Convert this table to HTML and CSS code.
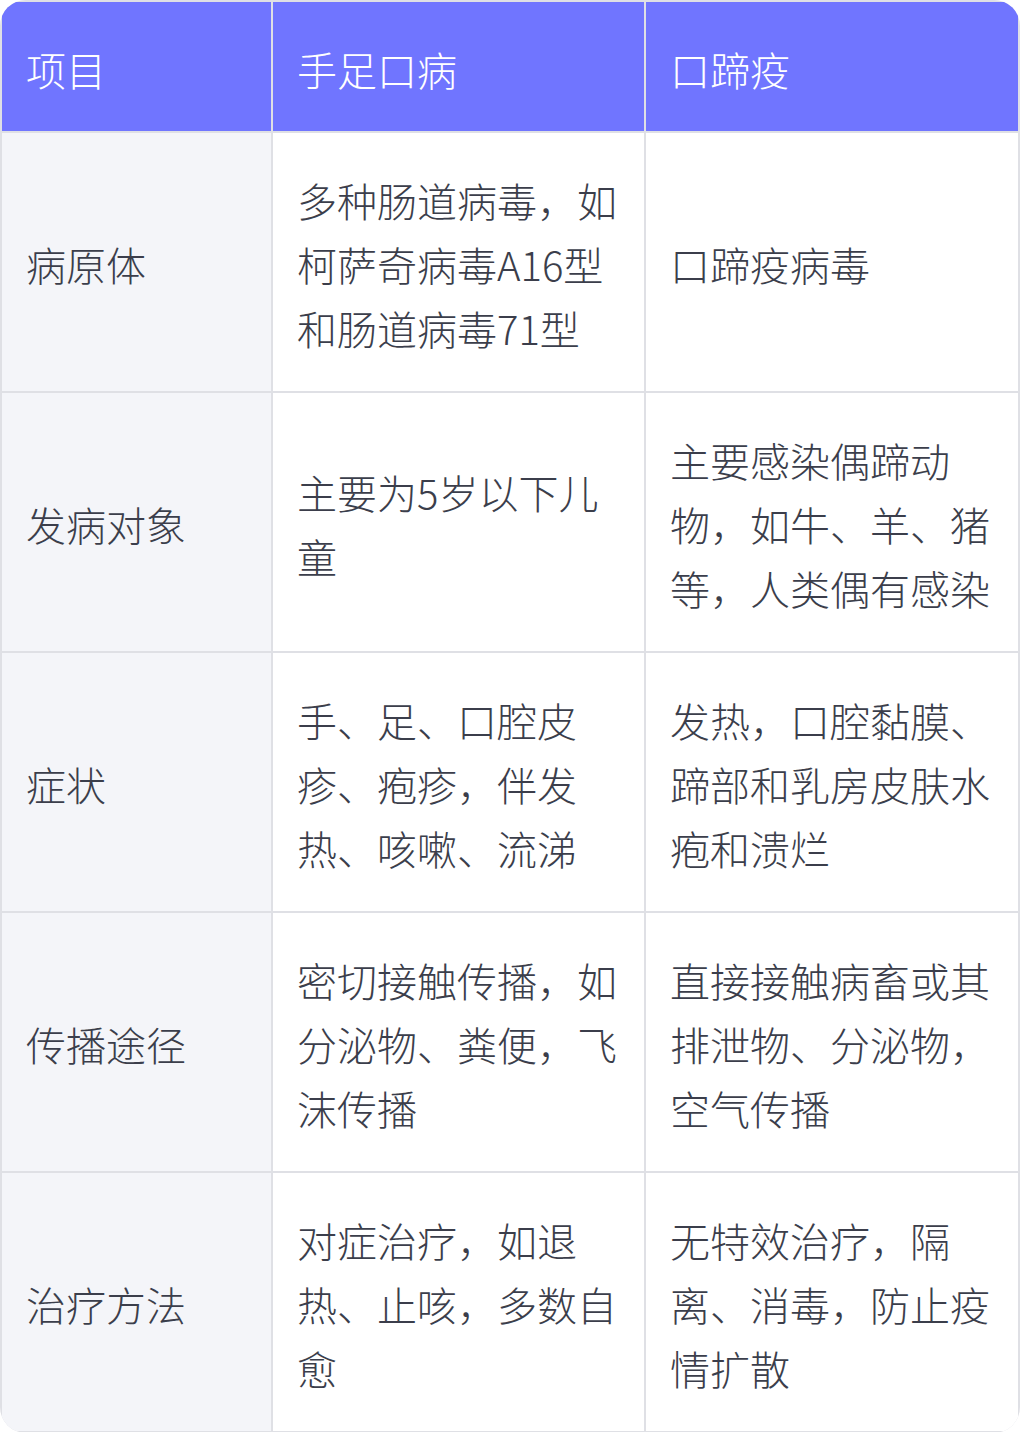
FILE: index.html
```html
<!DOCTYPE html>
<html lang="zh-CN">
<head>
<meta charset="utf-8">
<title>手足口病与口蹄疫对比</title>
<link rel="stylesheet" href="styles.css">
</head>
<body>
<div class="table">
  <div class="cell head">项目</div>
  <div class="cell head">手足口病</div>
  <div class="cell head">口蹄疫</div>

  <div class="cell label">病原体</div>
  <div class="cell">多种肠道病毒，如柯萨奇病毒A16型和肠道病毒71型</div>
  <div class="cell">口蹄疫病毒</div>

  <div class="cell label">发病对象</div>
  <div class="cell">主要为5岁以下儿童</div>
  <div class="cell">主要感染偶蹄动物，如牛、羊、猪等，人类偶有感染</div>

  <div class="cell label">症状</div>
  <div class="cell">手、足、口腔皮疹、疱疹，伴发热、咳嗽、流涕</div>
  <div class="cell">发热，口腔黏膜、蹄部和乳房皮肤水疱和溃烂</div>

  <div class="cell label">传播途径</div>
  <div class="cell">密切接触传播，如分泌物、粪便，飞沫传播</div>
  <div class="cell">直接接触病畜或其排泄物、分泌物，空气传播</div>

  <div class="cell label">治疗方法</div>
  <div class="cell">对症治疗，如退热、止咳，多数自愈</div>
  <div class="cell">无特效治疗，隔离、消毒，防止疫情扩散</div>
</div>
</body>
</html>
```

FILE: styles.css
```css
html, body {
  margin: 0;
  padding: 0;
  background: #ffffff;
}

.table {
  width: 1020px;
  box-sizing: border-box;
  display: grid;
  grid-template-columns: 269px 371px 372px;
  grid-template-rows: 129px repeat(5, 258px);
  gap: 2px;
  padding: 2px;
  background: #dfe0e5;
  border-radius: 26px;
  overflow: hidden;
  font-family: "Noto Sans CJK SC", "Noto Sans", sans-serif;
  font-size: 40px;
  font-weight: 300;
  line-height: 64px;
  color: #3b3e4b;
}

.cell {
  background: #ffffff;
  padding: 4px 24px 0;
  display: flex;
  align-items: center;
  word-break: break-all;
}

.cell.head {
  background: #7075ff;
  color: #ffffff;
}

.cell.label {
  background: #f4f5f9;
}
```
